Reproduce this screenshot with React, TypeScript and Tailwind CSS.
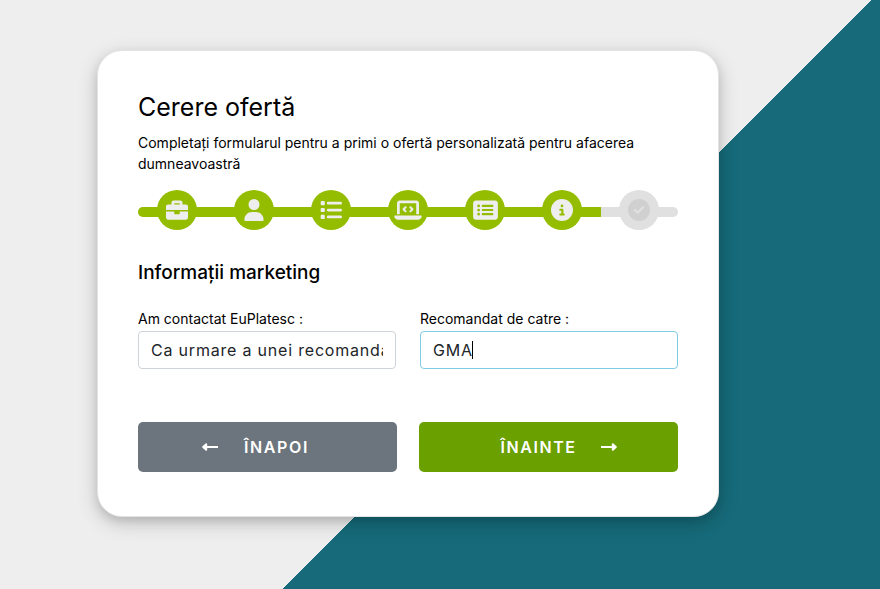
import { useState } from "react";
import {
  FaCircleCheck,
  FaCircleInfo,
  FaLaptopCode,
  FaList,
  FaRectangleList,
  FaUser,
} from "react-icons/fa6";
import { FaBriefcase } from "react-icons/fa";

const steps = [
  { icon: FaBriefcase, size: "w-[22px]", done: true },
  { icon: FaUser, size: "w-5", done: true },
  { icon: FaList, size: "w-[22px]", done: true },
  { icon: FaLaptopCode, size: "w-7", done: true },
  { icon: FaRectangleList, size: "w-[25px]", done: true },
  { icon: FaCircleInfo, size: "w-[22px]", done: true },
  { icon: FaCircleCheck, size: "w-[22px]", done: false },
];

function Stepper() {
  const done = steps.filter((step) => step.done).length;
  return (
    <div className="mt-4 grid items-center">
      <div className="col-start-1 row-start-1 mt-1 h-[10px] overflow-hidden rounded-[5px] bg-[#e0e0e0]">
        <div
          className="h-full bg-[#94bd00]"
          style={{ width: `${(done / steps.length) * 100}%` }}
        />
      </div>
      <ol className="col-start-1 row-start-1 grid grid-cols-7 justify-items-center">
        {steps.map(({ icon: Icon, size, done }, i) => (
          <li
            key={i}
            className={
              done
                ? "flex size-10 items-center justify-center rounded-full bg-[#94bd00] text-[#eeeeee]"
                : "flex size-10 items-center justify-center rounded-full bg-[#e0e0e0] text-[#d0d0d0]"
            }
          >
            <Icon className={`h-[22px] shrink-0 ${size}`} />
          </li>
        ))}
      </ol>
    </div>
  );
}

function Arrow({ className = "" }: { className?: string }) {
  return (
    <svg
      viewBox="0 0 16 16"
      className={`size-4 ${className}`}
      fill="none"
      stroke="currentColor"
      strokeWidth="2"
      strokeLinejoin="round"
    >
      <path d="M3 8h13" />
      <path d="M4.2 5.2 1.2 8l3 2.8z" fill="currentColor" />
    </svg>
  );
}

export default function App() {
  const [source, setSource] = useState("Ca urmare a unei recomandari");
  const [referrer, setReferrer] = useState("GMA");
  const field =
    "h-[38px] w-full rounded border bg-white px-3 text-base tracking-wider text-[#212529] outline-none";

  return (
    <main className="min-h-screen bg-[linear-gradient(135deg,#eeeeee_616px,#166a79_616px)] px-[97px] py-[50px] font-[Inter,'Liberation_Sans',sans-serif] text-black">
      <form
        onSubmit={(e) => e.preventDefault()}
        className="w-full max-w-[622px] rounded-[25px] border border-[#e4e4e4] bg-white px-10 pt-10 pb-11 shadow-[0_4px_8px_rgba(0,0,0,0.1),0_6px_20px_rgba(0,0,0,0.19)]"
      >
        <h1 className="text-[25px] leading-8">Cerere ofertă</h1>
        <p className="mt-[9px] text-sm leading-[21px]">
          Completați formularul pentru a primi o ofertă personalizată pentru afacerea dumneavoastră
        </p>
        <Stepper />
        <h2 className="mt-[31px] text-[19px] leading-6 font-medium">Informații marketing</h2>
        <div className="mt-[23px] grid grid-cols-2 gap-6">
          <div>
            <label htmlFor="source" className="block text-sm leading-[21px]">
              Am contactat EuPlatesc :
            </label>
            <input
              id="source"
              value={source}
              onChange={(e) => setSource(e.target.value)}
              className={`${field} mt-[2px] border-[#ced4da]`}
            />
          </div>
          <div>
            <label htmlFor="referrer" className="block text-sm leading-[21px]">
              Recomandat de catre :
            </label>
            <div className="relative mt-[2px]">
              <input
                id="referrer"
                value={referrer}
                onChange={(e) => setReferrer(e.target.value)}
                className={`${field} border-[#7ecbe6] caret-transparent`}
              />
              <span className="pointer-events-none absolute inset-y-0 left-[13px] flex items-center text-base tracking-wider">
                <span aria-hidden="true" className="invisible">{referrer}</span>
                <span className="-ml-px h-[18px] w-px bg-black" />
              </span>
            </div>
          </div>
        </div>
        <div className="mt-[53px] grid grid-cols-2 gap-[22px]">
          <button
            type="button"
            className="flex h-[50px] items-center justify-center gap-[26px] rounded-[5px] bg-[#6c757d] pr-6 font-semibold tracking-widest text-white"
          >
            <Arrow />
            ÎNAPOI
          </button>
          <button
            type="submit"
            className="flex h-[50px] items-center justify-center gap-6 rounded-[5px] bg-[#6aa000] pl-5 font-semibold tracking-widest text-white"
          >
            ÎNAINTE
            <Arrow className="rotate-180" />
          </button>
        </div>
      </form>
    </main>
  );
}
